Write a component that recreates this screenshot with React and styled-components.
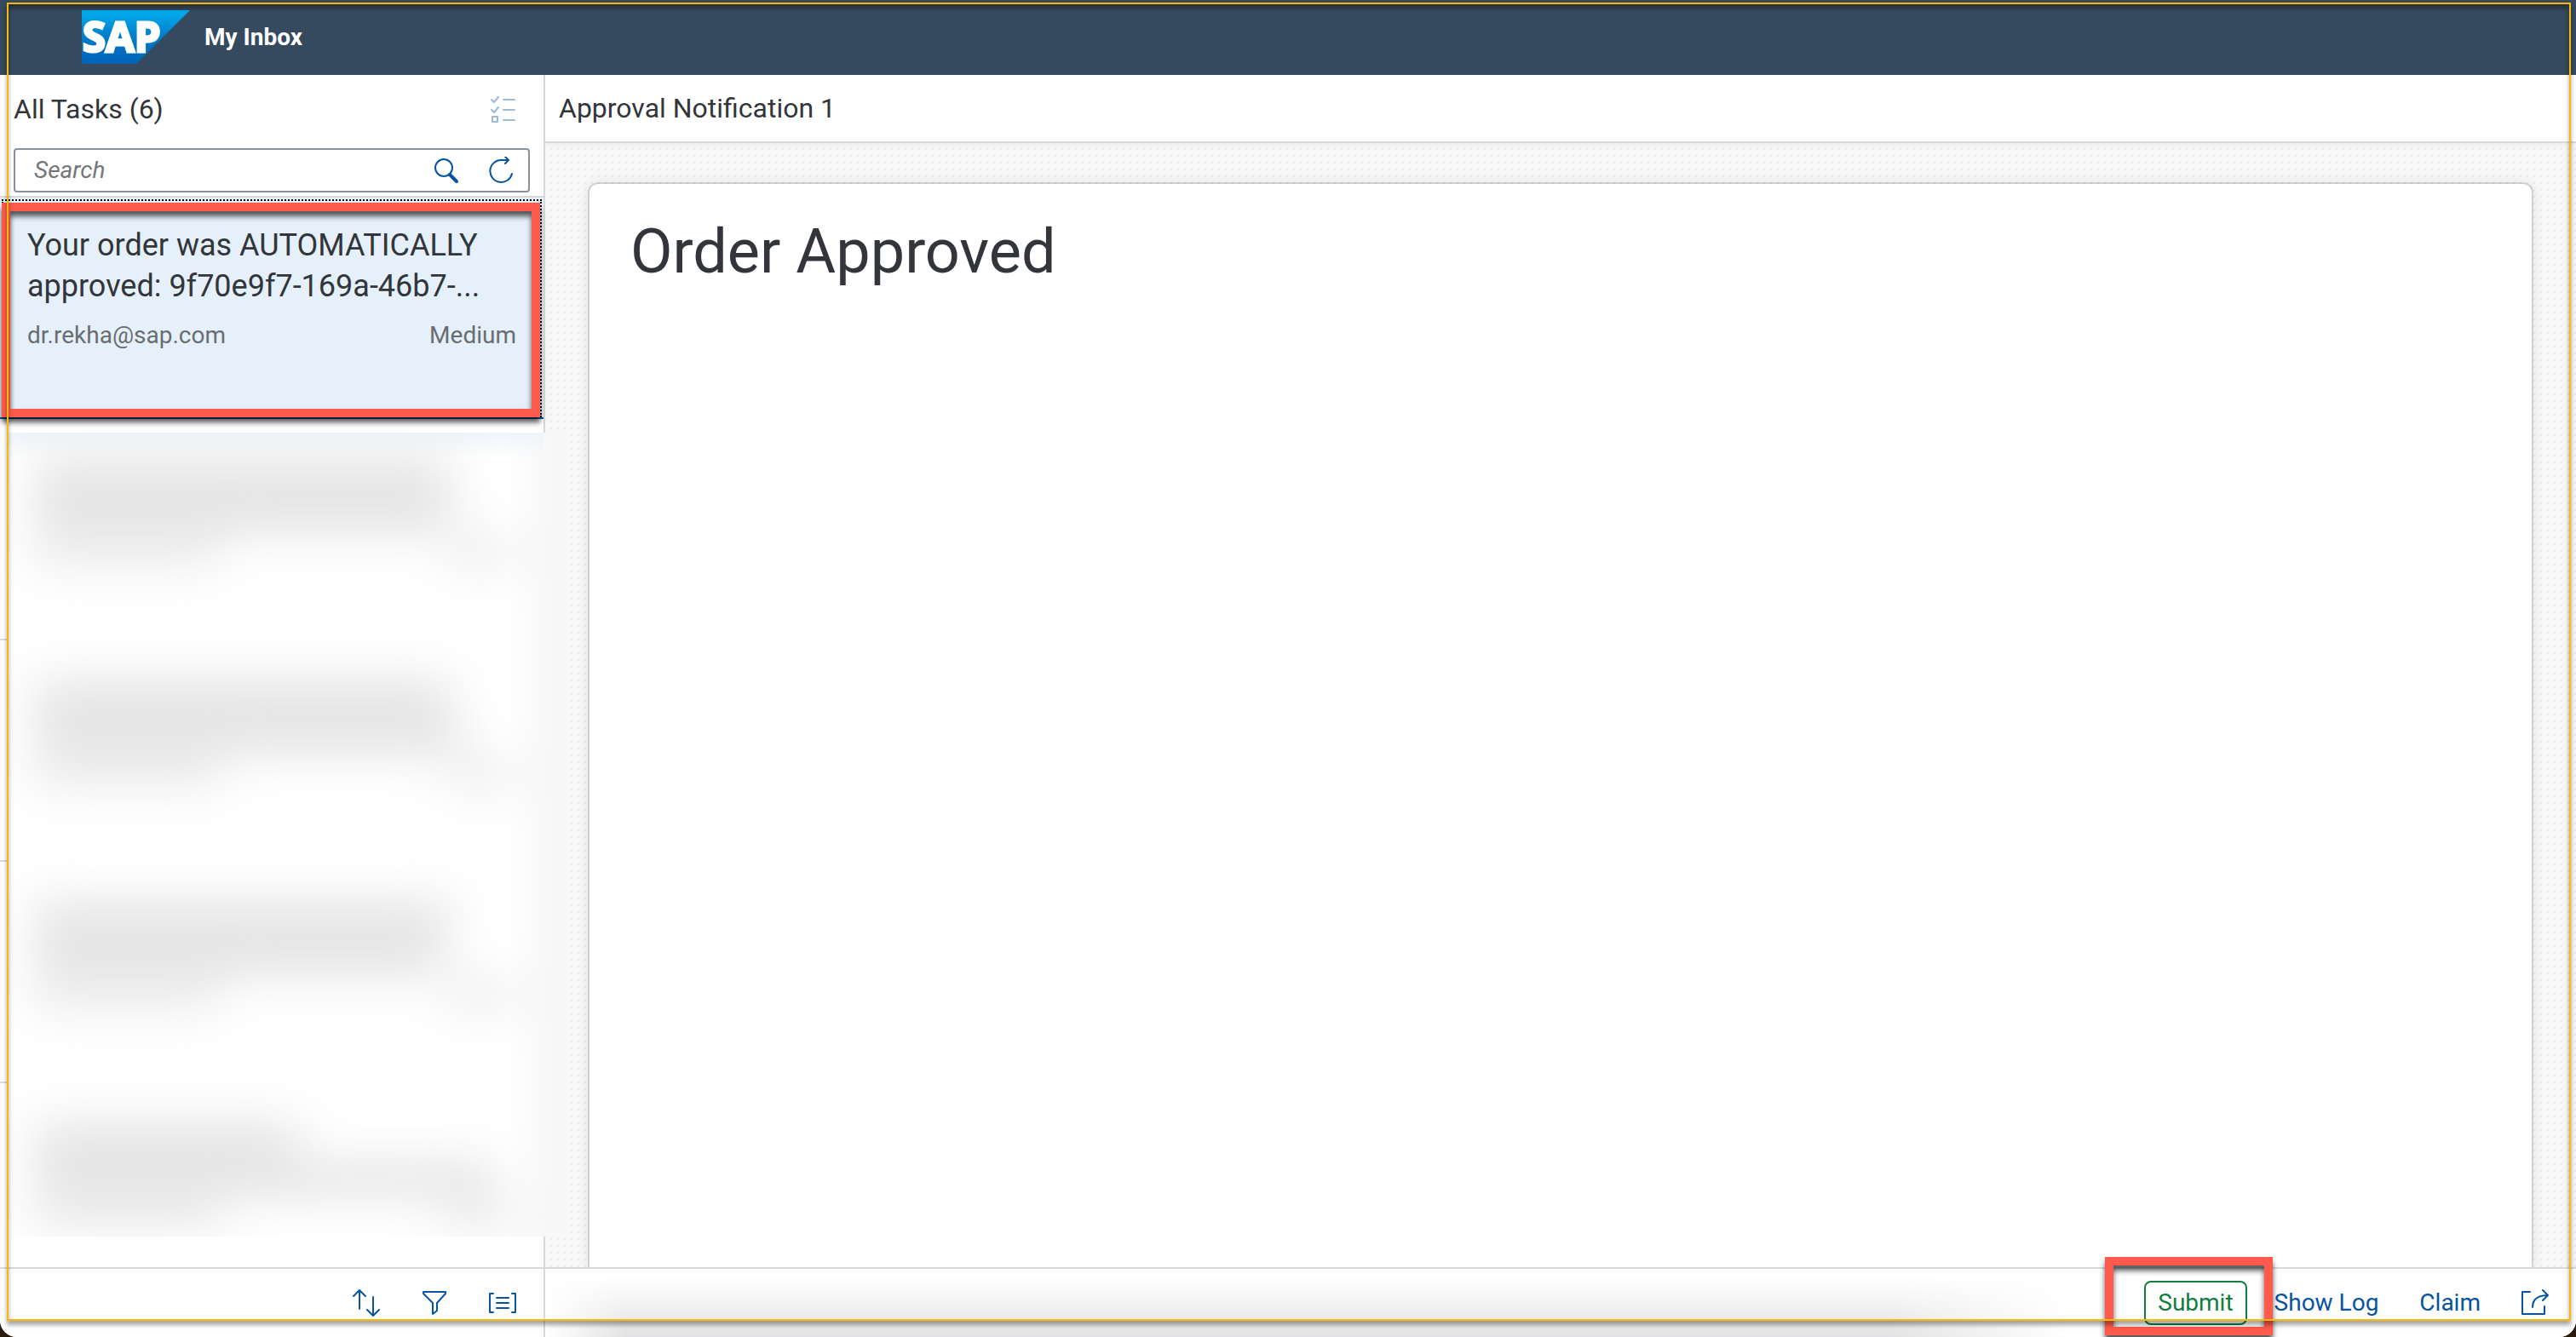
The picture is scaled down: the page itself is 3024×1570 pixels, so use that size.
import React from 'react';
import styled, { createGlobalStyle, css } from 'styled-components';

const blue = '#0854a0';
const line = '#d9d9d9';
const ink = '#32363a';

const Global = createGlobalStyle`
  *, *::before, *::after { box-sizing: border-box; }
  html, body, #root { height: 100%; }
  body { margin: 0; background: #2a1c0c; overflow: hidden; }
  body, button, input { font-family: Roboto, "Liberation Sans", sans-serif; }
`;

const Page = styled.div`
  position: relative;
  display: flex;
  flex-direction: column;
  height: 100vh;
  overflow: hidden;
  background: #fff;
  border-radius: 0 0 20px 20px;
  color: ${ink};
`;

const ShellBar = styled.header`
  display: flex;
  align-items: center;
  gap: 16px;
  flex: none;
  height: 88px;
  padding: 0 96px;
  background: #354a5f;
`;

const Logo = styled.svg`
  display: block;
  width: 128px;
  height: 64px;
  overflow: visible;
`;

const AppTitle = styled.h1`
  margin: 0;
  font-size: 28px;
  line-height: 32px;
  font-weight: 700;
  color: #fff;
`;

const Columns = styled.div`
  display: grid;
  grid-template-columns: 640px minmax(0, 1fr);
  flex: 1;
  min-height: 0;
`;

const Master = styled.aside`
  display: flex;
  flex-direction: column;
  min-height: 0;
  border-right: 2px solid ${line};
`;

const Detail = styled.main`
  display: flex;
  flex-direction: column;
  min-height: 0;
`;

const Bar = styled.div`
  display: flex;
  align-items: center;
  justify-content: space-between;
  flex: none;
  height: 80px;
  padding: 0 16px;
  ${(p) => p.$ruled && css`
    border-bottom: 2px solid ${line};
    box-shadow: 0 2px 8px rgba(0, 0, 0, 0.05);
    z-index: 1;
  `}
`;

const BarTitle = styled.h2`
  margin: 0;
  font-size: 32px;
  line-height: 40px;
  font-weight: 400;
`;

const IconButton = styled.button`
  display: grid;
  place-items: center;
  width: 64px;
  height: 48px;
  padding: 0;
  border: 0;
  background: none;
  color: ${blue};
  &:disabled { opacity: 0.4; }
  svg { display: block; width: 32px; height: 32px; }
`;

const SearchArea = styled.form`
  flex: none;
  padding: 6px 16px 4px;
  border-bottom: 2px solid ${line};
`;

const SearchField = styled.div`
  display: flex;
  align-items: center;
  height: 52px;
  border: 2px solid #89919a;
  border-radius: 4px;
  background: #fff;
`;

const SearchInput = styled.input`
  flex: 1;
  min-width: 0;
  padding: 0 22px;
  border: 0;
  outline: 0;
  background: none;
  font-size: 28px;
  line-height: 32px;
  color: ${ink};
  &::placeholder { color: #74777a; font-style: italic; opacity: 1; }
`;

const TaskList = styled.ul`
  position: relative;
  flex: 1;
  min-height: 0;
  margin: 0;
  padding: 0;
  list-style: none;
`;

const Task = styled.li`
  position: relative;
  height: 260px;
  padding: 32px 32px 0;
  border-bottom: 2px solid ${(p) => (p.$selected ? blue : line)};
  background: ${(p) => (p.$selected ? '#e5f0fa' : '#fff')};
  &::before {
    content: '';
    display: ${(p) => (p.$selected ? 'block' : 'none')};
    position: absolute;
    inset: 2px 2px 0;
    border: 2px dotted #000;
  }
`;

const TaskTitle = styled.h3`
  margin: 0 0 14px;
  font-size: 36px;
  line-height: 48px;
  font-weight: 400;
  display: -webkit-box;
  -webkit-box-orient: vertical;
  -webkit-line-clamp: 2;
  overflow: hidden;
`;

const TaskMeta = styled.div`
  display: flex;
  justify-content: space-between;
  font-size: 28px;
  line-height: 40px;
  color: #6a6d70;
`;

const Redaction = styled.div`
  position: absolute;
  inset: 276px -28px 36px 10px;
  z-index: 2;
  overflow: hidden;
  background: linear-gradient(90deg, #fff 0, #fff 584px, #f7f7f7 640px);
  &::before {
    content: '';
    position: absolute;
    inset: 0 28px auto 0;
    height: 32px;
    background: linear-gradient(#eff4f9, rgba(239, 244, 249, 0));
  }
`;

const Smudges = styled.div`
  display: flex;
  flex-direction: column;
  gap: 114px;
  padding: 32px 62px 0 30px;
  filter: blur(28px);
`;

const Smudge = styled.div`
  display: grid;
  grid-template-columns: 1fr 80px;
  grid-auto-rows: 38px 38px 32px;
  gap: 8px 24px;
  height: 146px;
`;

const Streak = styled.span`
  grid-column: ${(p) => (p.$side ? '2' : p.$wide ? '1 / 3' : '1')};
  width: ${(p) => p.$width || 'auto'};
  background: ${(p) => (p.$faint ? '#e9e9e9' : '#e0e0e0')};
`;

const Footer = styled.footer`
  display: flex;
  align-items: center;
  justify-content: flex-end;
  gap: 16px;
  flex: none;
  height: 82px;
  padding: 0 16px;
  border-top: 2px solid ${line};
  background: ${(p) => p.$shaded
    ? `linear-gradient(90deg, #fff, rgba(255, 255, 255, 0) 4%, rgba(255, 255, 255, 0) 66%, #fff 75%),
       linear-gradient(#fff 10%, #e2e2e4)`
    : '#fff'};
`;

const TextButton = styled.button`
  height: 52px;
  padding: 0 14px;
  border: 2px solid ${(p) => (p.$accept ? '#107e3e' : 'transparent')};
  border-radius: 8px;
  background: ${(p) => (p.$accept ? '#fff' : 'none')};
  color: ${(p) => (p.$accept ? '#107e3e' : blue)};
  font-size: 28px;
  line-height: 32px;
  white-space: nowrap;
`;

const Canvas = styled.section`
  flex: 1;
  min-height: 0;
  overflow: hidden;
  padding: 48px 52px 0;
  background-color: #f7f7f7;
  background-image: conic-gradient(from 90deg at 6px 6px, #ebebeb 25%, transparent 0);
  background-size: 8px 8px;
`;

const Card = styled.article`
  height: 100%;
  padding: 32px 48px;
  border-radius: 10px 10px 0 0;
  background: #fff;
  box-shadow: 0 0 0 2px rgba(0, 0, 0, 0.12), 0 0 16px rgba(0, 0, 0, 0.1);
`;

const CardTitle = styled.h2`
  margin: 0;
  font-size: 72px;
  line-height: 96px;
  font-weight: 400;
`;

const Marker = styled.div`
  position: absolute;
  z-index: 4;
  pointer-events: none;
  border: 10px solid #ff5a4b;
  box-shadow: 0 6px 6px rgba(0, 0, 0, 0.65), inset 0 6px 6px rgba(0, 0, 0, 0.65);
`;

const TaskMarker = styled(Marker)`
  inset: 6px 4px 0 2px;
`;

const SubmitSpot = styled.div`
  position: relative;
`;

const SubmitMarker = styled(Marker)`
  inset: -28px -30px -12px -46px;
`;

const WindowFrame = styled.div`
  position: absolute;
  inset: 3px 6px 19px 8px;
  z-index: 5;
  pointer-events: none;
  border: 2px solid #fcb900;
  box-shadow: 0 5px 5px rgba(0, 0, 0, 0.35), inset 0 5px 5px rgba(0, 0, 0, 0.35);
`;

const Icon = ({ children }) => (
  <svg viewBox="0 0 32 32" fill="none" stroke="currentColor" strokeWidth="2"
    strokeLinecap="round" strokeLinejoin="round" aria-hidden="true">{children}</svg>
);

const redacted = [
  ['490px', '490px'],
  ['490px', '500px'],
  ['490px', '480px'],
  ['310px', '540px'],
];

export default function App() {
  return (
    <>
      <Global />
      <Page>
        <ShellBar>
          <Logo viewBox="0 0 128 64" role="img" aria-label="SAP">
            <defs>
              <linearGradient id="sap" x1="0" y1="0" x2="0" y2="1">
                <stop offset="0" stopColor="#00aeef" />
                <stop offset="0.5" stopColor="#007cc9" />
                <stop offset="1" stopColor="#0063b8" />
              </linearGradient>
            </defs>
            <path d="M0 0H127L64 63H0Z" fill="url(#sap)" />
            <text x="1" y="49" fontFamily="Open Sans, sans-serif" fontWeight="700"
              fontSize="49" fill="#fff" stroke="#fff" strokeWidth="3">SAP</text>
          </Logo>
          <AppTitle>My Inbox</AppTitle>
        </ShellBar>
        <Columns>
          <Master>
            <Bar>
              <BarTitle>All Tasks (6)</BarTitle>
              <IconButton type="button" disabled aria-label="Multi-select">
                <Icon>
                  <path d="M3 5l3 3 5-6M3 17l3 3 5-6M4 25h6v6H4zM17 5h13M17 17h13M17 29h13" />
                </Icon>
              </IconButton>
            </Bar>
            <SearchArea onSubmit={(e) => e.preventDefault()}>
              <SearchField>
                <SearchInput type="text" placeholder="Search" aria-label="Search" />
                <IconButton type="submit" aria-label="Search">
                  <Icon><circle cx="13" cy="13" r="10" /><path d="M20 21l8 8" strokeWidth="4" /></Icon>
                </IconButton>
                <IconButton type="button" aria-label="Refresh">
                  <Icon><path d="M29 20a13 13 0 1 1-13-16h9M21 0l4 4-4 4" /></Icon>
                </IconButton>
              </SearchField>
            </SearchArea>
            <TaskList>
              <Task $selected>
                <TaskTitle>Your order was AUTOMATICALLY approved: 9f70e9f7-169a-46b7-...</TaskTitle>
                <TaskMeta><span>dr.rekha@sap.com</span><span>Medium</span></TaskMeta>
                <TaskMarker />
              </Task>
              <Task /><Task /><Task />
              <Redaction aria-hidden="true">
                <Smudges>
                  {redacted.map(([first, second], i) => (
                    <Smudge key={i}>
                      <Streak $wide $width={first} />
                      <Streak $wide $width={second} />
                      <Streak $faint $width="220px" />
                      <Streak $faint $side />
                    </Smudge>
                  ))}
                </Smudges>
              </Redaction>
            </TaskList>
            <Footer>
              <IconButton type="button" aria-label="Sort">
                <Icon><path d="M8 23V1M1 8l7-7 7 7M24 9v22M17 24l7 7 7-7" /></Icon>
              </IconButton>
              <IconButton type="button" aria-label="Filter">
                <Icon><path d="M3 3h26v2L19 16v9l-5 4V16L3 5z" /></Icon>
              </IconButton>
              <IconButton type="button" aria-label="Group">
                <Icon><path d="M5 5H1v22h4M27 5h4v22h-4M9 10h14M9 16h14M9 22h14" /></Icon>
              </IconButton>
            </Footer>
          </Master>
          <Detail>
            <Bar $ruled><BarTitle>Approval Notification 1</BarTitle></Bar>
            <Canvas>
              <Card><CardTitle>Order Approved</CardTitle></Card>
            </Canvas>
            <Footer $shaded>
              <SubmitSpot>
                <TextButton type="button" $accept>Submit</TextButton>
                <SubmitMarker />
              </SubmitSpot>
              <TextButton type="button">Show Log</TextButton>
              <TextButton type="button">Claim</TextButton>
              <IconButton type="button" aria-label="Share">
                <Icon><path d="M10 3H1v26h26v-9M13 21c0-9 5-14 18-14M25 1l6 6-6 6" /></Icon>
              </IconButton>
            </Footer>
          </Detail>
        </Columns>
        <WindowFrame />
      </Page>
    </>
  );
}
